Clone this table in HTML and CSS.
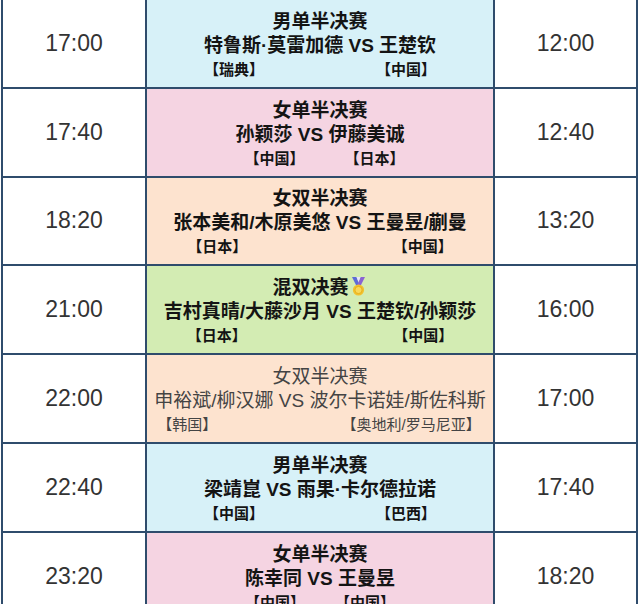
FILE: index.html
```html
<!DOCTYPE html>
<html lang="zh">
<head>
<meta charset="utf-8">
<title>赛程</title>
<link rel="stylesheet" href="styles.css">
</head>
<body>
<div class="schedule">
  <div class="time">17:00</div>
  <div class="match blue">
    <div class="teams">
      <div class="title">男单半决赛</div>
      <div class="names">特鲁斯·莫雷加德 VS 王楚钦</div>
      <div class="countries"><span>【瑞典】</span><span>【中国】</span></div>
    </div>
  </div>
  <div class="time">12:00</div>

  <div class="time">17:40</div>
  <div class="match pink">
    <div class="teams">
      <div class="title">女单半决赛</div>
      <div class="names">孙颖莎 VS 伊藤美诚</div>
      <div class="countries inset-b"><span>【中国】</span><span>【日本】</span></div>
    </div>
  </div>
  <div class="time">12:40</div>

  <div class="time">18:20</div>
  <div class="match peach">
    <div class="teams">
      <div class="title">女双半决赛</div>
      <div class="names">张本美和/木原美悠 VS 王曼昱/蒯曼</div>
      <div class="countries inset-c"><span>【日本】</span><span>【中国】</span></div>
    </div>
  </div>
  <div class="time">13:20</div>

  <div class="time">21:00</div>
  <div class="match green">
    <div class="teams">
      <div class="title">混双决赛<svg class="medal" viewBox="0 0 19 19" width="19" height="19" aria-hidden="true"><polygon points="3,0 7.5,0 11,9 8,10" fill="#5d6bd8"/><polygon points="16,0 11.5,0 8,9 11,10" fill="#8a63d2"/><polygon points="7.5,0 11.5,0 9.5,5" fill="#e8e6f7"/><circle cx="9.5" cy="13" r="5.6" fill="#f2c12e"/><circle cx="9.5" cy="13" r="3.6" fill="#f8d75a" stroke="#e2a913" stroke-width="0.8"/></svg></div>
      <div class="names">吉村真晴/大藤沙月 VS 王楚钦/孙颖莎</div>
      <div class="countries inset-d"><span>【日本】</span><span>【中国】</span></div>
    </div>
  </div>
  <div class="time">16:00</div>

  <div class="time">22:00</div>
  <div class="match peach muted">
    <div class="teams">
      <div class="title">女双半决赛</div>
      <div class="names">申裕斌/柳汉娜 VS 波尔卡诺娃/斯佐科斯</div>
      <div class="countries inset-e"><span>【韩国】</span><span>【奥地利/罗马尼亚】</span></div>
    </div>
  </div>
  <div class="time">17:00</div>

  <div class="time">22:40</div>
  <div class="match blue">
    <div class="teams">
      <div class="title">男单半决赛</div>
      <div class="names">梁靖崑 VS 雨果·卡尔德拉诺</div>
      <div class="countries"><span>【中国】</span><span>【巴西】</span></div>
    </div>
  </div>
  <div class="time">17:40</div>

  <div class="time">23:20</div>
  <div class="match pink">
    <div class="teams">
      <div class="title">女单半决赛</div>
      <div class="names">陈幸同 VS 王曼昱</div>
      <div class="countries"><span>【中国】</span><span>【中国】</span></div>
    </div>
  </div>
  <div class="time">18:20</div>
</div>
</body>
</html>
```

FILE: styles.css
```css
html, body {
  margin: 0;
  padding: 0;
  background: #ffffff;
}

body {
  width: 638px;
  height: 604px;
  overflow: hidden;
  font-family: "Liberation Sans", "Noto Sans CJK SC", sans-serif;
}

.schedule {
  display: grid;
  grid-template-columns: 142px 346px 141px;
  grid-auto-rows: 86.8px;
  gap: 2px;
  width: max-content;
  margin: -2px 0 0 1px;
  border: 2px solid #2f4c6c;
  background: #2f4c6c;
}

.time {
  display: flex;
  align-items: center;
  justify-content: center;
  background: #ffffff;
  color: #333333;
  font-size: 23px;
}

.match {
  display: flex;
  align-items: center;
  justify-content: center;
  color: #141414;
  font-weight: 700;
}

.blue { background: #d7f1f8; }
.pink { background: #f5d4e2; }
.peach { background: #fde3cf; }
.green { background: #d3ecb3; }

.match.muted {
  font-weight: 400;
  color: #444444;
}

.teams {
  display: inline-flex;
  flex-direction: column;
  text-align: center;
  padding-top: 5px;
}

.title,
.names {
  font-size: 19px;
  line-height: 24px;
  white-space: nowrap;
}

.medal {
  vertical-align: -2px;
}

.countries {
  display: flex;
  justify-content: space-between;
  font-size: 15px;
  line-height: 24px;
  white-space: nowrap;
}

.inset-b { padding-left: 9px; }
.inset-c { padding: 0 14px; }
.inset-d { padding: 0 23px; }
.inset-e { padding: 0 5px 0 3px; }
```
